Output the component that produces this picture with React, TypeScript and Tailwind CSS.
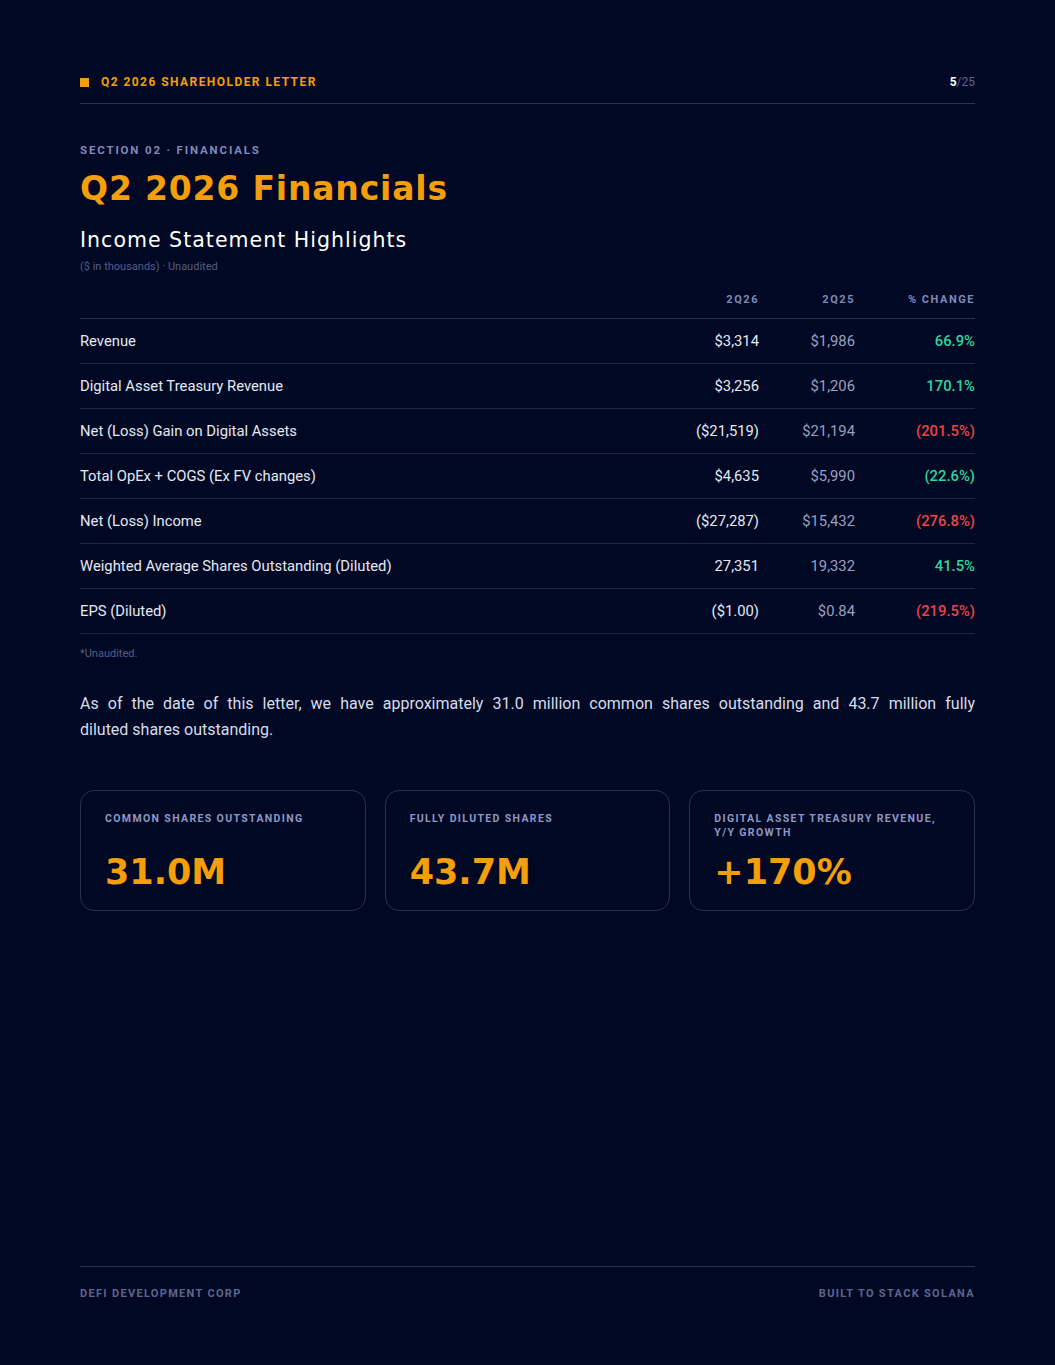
import React from "react";

const rows = [
  { label: "Revenue", a: "$3,314", b: "$1,986", c: "66.9%", pos: true },
  { label: "Digital Asset Treasury Revenue", a: "$3,256", b: "$1,206", c: "170.1%", pos: true },
  { label: "Net (Loss) Gain on Digital Assets", a: "($21,519)", b: "$21,194", c: "(201.5%)", pos: false },
  { label: "Total OpEx + COGS (Ex FV changes)", a: "$4,635", b: "$5,990", c: "(22.6%)", pos: true },
  { label: "Net (Loss) Income", a: "($27,287)", b: "$15,432", c: "(276.8%)", pos: false },
  { label: "Weighted Average Shares Outstanding (Diluted)", a: "27,351", b: "19,332", c: "41.5%", pos: true },
  { label: "EPS (Diluted)", a: "($1.00)", b: "$0.84", c: "(219.5%)", pos: false },
];

const display = { fontFamily: '"DejaVu Sans", sans-serif' };

export default function App() {
  return (
    <div
      className="w-[1055px] h-[1365px] bg-[#000823] text-white flex flex-col px-[80px]"
      style={{ fontFamily: 'Roboto, "Liberation Sans", sans-serif' }}
    >
      {/* header */}
      <div className="flex items-center justify-between pt-[75px] pb-[14px] border-b border-[#2a3150]">
        <div className="flex items-center gap-[12px]">
          <div className="w-[9px] h-[9px] bg-[#f59e0b]" />
          <span className="text-[12px] font-bold tracking-[0.12em] text-[#f59e0b] leading-[14px]">
            Q2 2026 SHAREHOLDER LETTER
          </span>
        </div>
        <div className="text-[12px] leading-[14px]">
          <span className="font-bold text-white">5</span>
          <span className="text-[#5d6590]">/25</span>
        </div>
      </div>

      <div className="pt-[39px] text-[11.5px] font-bold tracking-[0.16em] text-[#8089b8] leading-[14px]">
        SECTION 02 · FINANCIALS
      </div>
      <h1
        className="mt-[12px] text-[33px] leading-[40px] font-semibold text-[#f59e0b] tracking-[0.025em]"
        style={display}
      >
        Q2 2026 Financials
      </h1>
      <h2 className="mt-[18px] text-[20.5px] leading-[26px] font-normal text-white tracking-[0.05em]" style={display}>
        Income Statement Highlights
      </h2>
      <div className="mt-[7px] text-[11px] leading-[14px] text-[#555d85]">($ in thousands) · Unaudited</div>

      {/* table */}
      <div className="mt-[19px]">
        <div className="grid grid-cols-[1fr_120px_96px_120px] pb-[11px] border-b border-[#2a3150] text-[11px] font-bold tracking-[0.14em] text-[#8089b8] leading-[14px]">
          <div />
          <div className="text-right">2Q26</div>
          <div className="text-right">2Q25</div>
          <div className="text-right">% CHANGE</div>
        </div>
        {rows.map((r) => (
          <div
            key={r.label}
            className="grid grid-cols-[1fr_120px_96px_120px] items-center h-[45px] border-b border-[#1f2644] text-[14.8px]"
          >
            <div className="text-[#e6e8f2]">{r.label}</div>
            <div className="text-right text-[#e6e8f2]">{r.a}</div>
            <div className="text-right text-[#9aa0c0]">{r.b}</div>
            <div className={`text-right font-medium ${r.pos ? "text-[#2fd69c]" : "text-[#ef4444]"}`}>{r.c}</div>
          </div>
        ))}
      </div>
      <div className="mt-[13px] text-[11px] leading-[14px] text-[#555d85]">*Unaudited.</div>

      <p className="mt-[30px] text-[16px] leading-[26px] text-[#d9dceb] text-justify">
        As of the date of this letter, we have approximately 31.0 million common shares outstanding and 43.7 million fully{" "}
        <span className="whitespace-nowrap">diluted shares outstanding.</span>
      </p>

      {/* cards */}
      <div className="mt-[47px] grid grid-cols-3 gap-[19px]">
        {[
          { l: "COMMON SHARES OUTSTANDING", v: "31.0M" },
          { l: "FULLY DILUTED SHARES", v: "43.7M" },
          { l: "DIGITAL ASSET TREASURY REVENUE, Y/Y GROWTH", v: "+170%" },
        ].map((c) => (
          <div
            key={c.l}
            className="h-[121px] rounded-[14px] border border-[#2a3150] px-[24px] pt-[21px] flex flex-col"
          >
            <div className="text-[10.5px] font-bold tracking-[0.13em] leading-[14px] text-[#8f97c4] h-[28px]">
              {c.l}
            </div>
            <div
              className="mt-[12px] text-[35px] leading-[40px] font-bold text-[#f59e0b]"
              style={display}
            >
              {c.v}
            </div>
          </div>
        ))}
      </div>

      <div className="flex-1" />

      {/* footer */}
      <div className="border-t border-[#2a3150] pt-[20px] pb-[64px] flex justify-between text-[11px] font-bold tracking-[0.12em] leading-[14px] text-[#5d6590]">
        <span>DEFI DEVELOPMENT CORP</span>
        <span>BUILT TO STACK SOLANA</span>
      </div>
    </div>
  );
}
